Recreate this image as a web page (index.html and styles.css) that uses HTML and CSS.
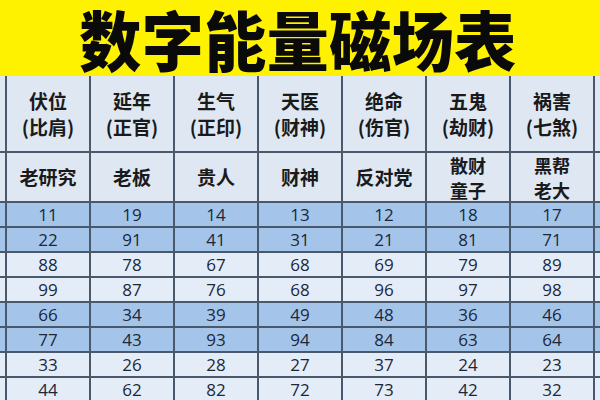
FILE: index.html
```html
<!DOCTYPE html>
<html lang="zh">
<head>
<meta charset="utf-8">
<link rel="stylesheet" href="styles.css">
</head>
<body>
<div class="page">
  <div class="title"><span class="title-text">数字能量磁场表</span></div>
  <div class="table">
    <div class="c hd"></div>
    <div class="c hd"><span>伏位</span><span>(比肩)</span></div>
    <div class="c hd"><span>延年</span><span>(正官)</span></div>
    <div class="c hd"><span>生气</span><span>(正印)</span></div>
    <div class="c hd"><span>天医</span><span>(财神)</span></div>
    <div class="c hd"><span>绝命</span><span>(伤官)</span></div>
    <div class="c hd"><span>五鬼</span><span>(劫财)</span></div>
    <div class="c hd"><span>祸害</span><span>(七煞)</span></div>
    <div class="c hd"></div>

    <div class="c hd"></div>
    <div class="c hd"><span>老研究</span></div>
    <div class="c hd"><span>老板</span></div>
    <div class="c hd"><span>贵人</span></div>
    <div class="c hd"><span>财神</span></div>
    <div class="c hd"><span>反对党</span></div>
    <div class="c hd tight"><span>散财</span><span>童子</span></div>
    <div class="c hd tight"><span>黑帮</span><span>老大</span></div>
    <div class="c hd"></div>

    <div class="c b"></div><div class="c b n">11</div><div class="c b n">19</div><div class="c b n">14</div><div class="c b n">13</div><div class="c b n">12</div><div class="c b n">18</div><div class="c b n">17</div><div class="c b"></div>
    <div class="c b"></div><div class="c b n">22</div><div class="c b n">91</div><div class="c b n">41</div><div class="c b n">31</div><div class="c b n">21</div><div class="c b n">81</div><div class="c b n">71</div><div class="c b"></div>
    <div class="c l"></div><div class="c l n">88</div><div class="c l n">78</div><div class="c l n">67</div><div class="c l n">68</div><div class="c l n">69</div><div class="c l n">79</div><div class="c l n">89</div><div class="c l"></div>
    <div class="c l"></div><div class="c l n">99</div><div class="c l n">87</div><div class="c l n">76</div><div class="c l n">68</div><div class="c l n">96</div><div class="c l n">97</div><div class="c l n">98</div><div class="c l"></div>
    <div class="c b"></div><div class="c b n">66</div><div class="c b n">34</div><div class="c b n">39</div><div class="c b n">49</div><div class="c b n">48</div><div class="c b n">36</div><div class="c b n">46</div><div class="c b"></div>
    <div class="c b"></div><div class="c b n">77</div><div class="c b n">43</div><div class="c b n">93</div><div class="c b n">94</div><div class="c b n">84</div><div class="c b n">63</div><div class="c b n">64</div><div class="c b"></div>
    <div class="c l"></div><div class="c l n">33</div><div class="c l n">26</div><div class="c l n">28</div><div class="c l n">27</div><div class="c l n">37</div><div class="c l n">24</div><div class="c l n">23</div><div class="c l"></div>
    <div class="c l"></div><div class="c l n">44</div><div class="c l n">62</div><div class="c l n">82</div><div class="c l n">72</div><div class="c l n">73</div><div class="c l n">42</div><div class="c l n">32</div><div class="c l"></div>
  </div>
</div>
</body>
</html>
```
FILE: styles.css
```css
html, body {
  margin: 0;
  padding: 0;
  background: #ffffff;
}
.page {
  width: 600px;
  height: 400px;
  overflow: hidden;
  display: flex;
  flex-direction: column;
}
.title {
  height: 76px;
  flex: none;
  background: #fff200;
  display: flex;
  align-items: center;
  justify-content: center;
}
.title-text {
  display: inline-block;
  font-family: "Noto Sans CJK SC", "Noto Sans", sans-serif;
  font-weight: 900;
  font-size: 62px;
  line-height: 1.15;
  color: #0a0a0a;
  letter-spacing: 0.5px;
  transform: scaleY(1.05);
  margin-left: -4px;
  margin-top: 2px;
}
.table {
  flex: none;
  display: grid;
  grid-template-columns: 5px repeat(7, 82px) 1fr;
  grid-template-rows: 75px 48px repeat(8, 23px);
  gap: 2px;
  background: #4a586b;
}
.c {
  display: flex;
  flex-direction: column;
  align-items: center;
  justify-content: center;
}
.hd {
  background: #dfe8f2;
  font-family: "Noto Sans CJK SC", "Noto Sans", sans-serif;
  font-weight: 700;
  font-size: 19px;
  line-height: 26px;
  color: #1a1a1a;
}
.hd.tight {
  font-size: 18px;
  line-height: 25px;
  padding-top: 2px;
}
.b {
  background: #a4c5e9;
}
.l {
  background: #e4edf7;
}
.n {
  font-family: "Open Sans", "Liberation Sans", sans-serif;
  font-size: 17px;
  line-height: 23px;
  color: #1b273a;
}
```
